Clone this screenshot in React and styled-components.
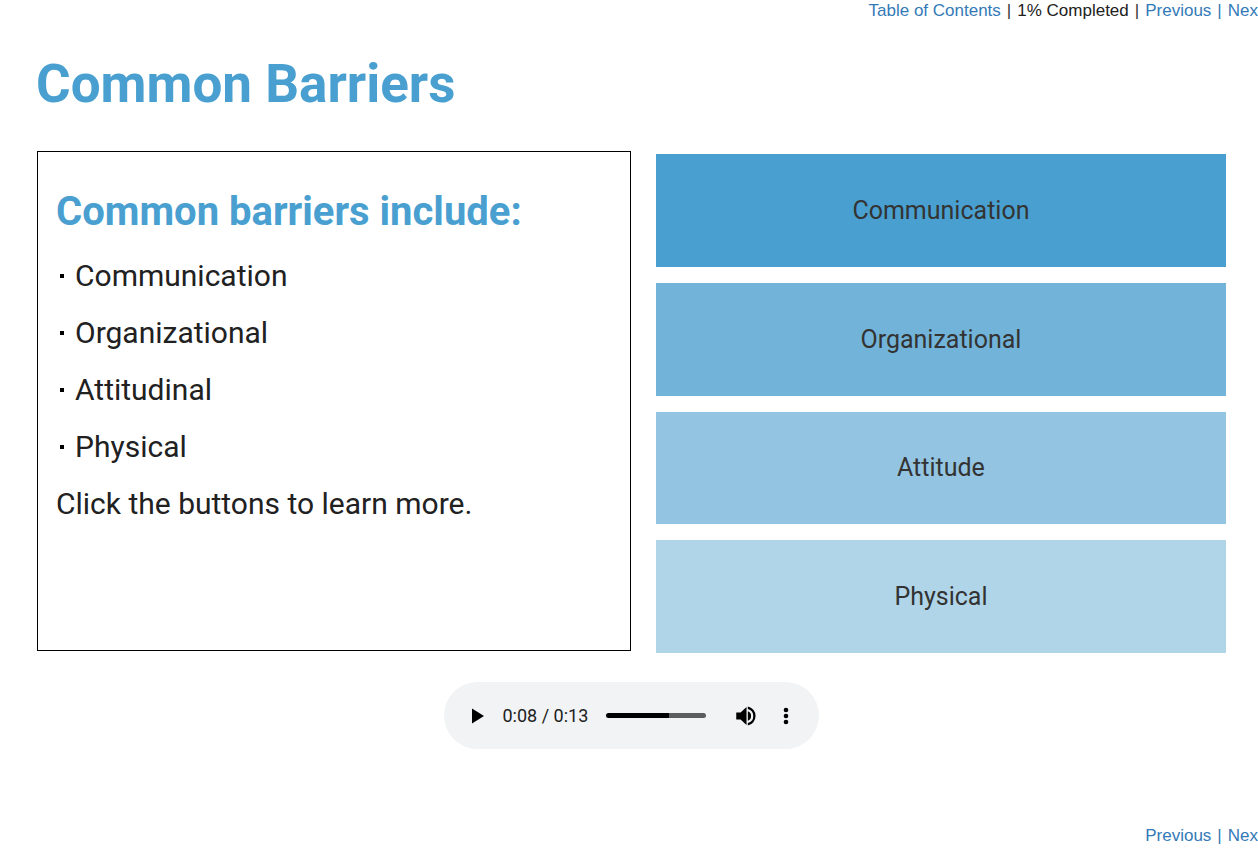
import React, { useState } from "react";
import styled, { createGlobalStyle } from "styled-components";

const GlobalStyle = createGlobalStyle`
  * {
    box-sizing: border-box;
  }

  body {
    margin: 0;
    background: #fff;
    color: #212121;
    font-family: Roboto, sans-serif;
  }
`;

const Page = styled.div`
  min-height: 100vh;
  display: flex;
  flex-direction: column;
`;

const Nav = styled.nav`
  display: flex;
  justify-content: flex-end;
  gap: 6px;
  font-family: "Liberation Sans", Arial, sans-serif;
  font-size: 17px;
  line-height: 22px;
  white-space: nowrap;
`;

const NavLink = styled.a`
  color: #337ab7;
  text-decoration: none;
`;

const Divider = styled.span`
  color: ${(props) => props.$color};
`;

const Main = styled.main`
  flex: 1;
  padding: 28px 32px 0 36px;
`;

const Title = styled.h1`
  margin: 0;
  color: #49a0d0;
  font-size: 53px;
  line-height: 68px;
  font-weight: 700;
`;

const Columns = styled.div`
  display: grid;
  grid-template-columns: 25fr 24fr;
  gap: 25px;
  margin: 33px 0 0 1px;
`;

const Panel = styled.section`
  margin-bottom: 2px;
  border: 1px solid #000;
  padding: 36px 18px;
`;

const PanelTitle = styled.h2`
  margin: 0 0 20px;
  color: #49a0d0;
  font-size: 40px;
  line-height: 48px;
  font-weight: 700;
`;

const List = styled.ul`
  margin: 0;
  padding: 0;
  list-style: none;
`;

const ListItem = styled.li`
  display: flex;
  align-items: center;
  gap: 11px;
  margin-bottom: 17px;
  font-size: 30px;
  line-height: 40px;

  &::before {
    content: "";
    width: 4px;
    height: 4px;
    margin-left: 4px;
    background: #000;
  }
`;

const Text = styled.p`
  margin: 0;
  font-size: 30px;
  line-height: 40px;
`;

const Buttons = styled.div`
  min-height: 502px;
  display: flex;
  flex-direction: column;
  gap: 16px;
  padding-top: 3px;
`;

const TopicButton = styled.button`
  flex: 1;
  border: none;
  background: ${(props) => props.$color};
  color: #333;
  font-family: inherit;
  font-size: 25px;
  cursor: pointer;
`;

const Player = styled.div`
  width: 375px;
  height: 67px;
  margin: 29px auto 0;
  padding: 0 20px 0 21px;
  display: flex;
  align-items: center;
  border-radius: 34px;
  background: #f1f3f4;
`;

const IconButton = styled.button`
  display: flex;
  padding: 0;
  border: none;
  background: none;
  color: #000;
  cursor: pointer;
`;

const Time = styled.span`
  margin-left: 14px;
  font-size: 18px;
`;

const Seek = styled.input`
  appearance: none;
  flex: 1;
  min-width: 0;
  height: 5px;
  margin: 0 27px 0 18px;
  border-radius: 3px;
  background: linear-gradient(
    to right,
    #000 ${(props) => props.$progress}%,
    #5b5c5c ${(props) => props.$progress}%
  );

  &::-webkit-slider-thumb {
    appearance: none;
    width: 0;
    height: 0;
  }
`;

const Footer = styled.footer`
  padding-bottom: 10px;
`;

const topics = [
  { name: "Communication", color: "#49a0d0" },
  { name: "Organizational", color: "#72b4d9" },
  { name: "Attitude", color: "#93c5e3" },
  { name: "Physical", color: "#b0d5e8" },
];

const barriers = ["Communication", "Organizational", "Attitudinal", "Physical"];

const PageLinks = () => (
  <>
    <NavLink href="#previous">Previous</NavLink>
    <Divider $color="#337ab7">|</Divider>
    <NavLink href="#next">Nex</NavLink>
  </>
);

const AudioPlayer = () => {
  const [time, setTime] = useState(8.2);

  return (
    <Player>
      <IconButton aria-label="Play">
        <svg width="24" height="24" viewBox="0 0 24 24" fill="currentColor">
          <path d="M7 4.5v15l12-7.5z" />
        </svg>
      </IconButton>
      <Time>0:{String(Math.floor(time)).padStart(2, "0")} / 0:13</Time>
      <Seek
        type="range"
        aria-label="Seek"
        min="0"
        max="13"
        step="0.1"
        value={time}
        onChange={(e) => setTime(Number(e.target.value))}
        $progress={(time / 13) * 100}
      />
      <IconButton aria-label="Mute">
        <svg width="26" height="26" viewBox="0 0 24 24" fill="currentColor">
          <path d="M3 8.7v6.600h4l5.500 5V3.700L7 8.700H3zm13.700 3.300A4.500 4.500 0 0 0 13.700 7.700v8.600A4.500 4.500 0 0 0 16.700 12zM13.700 3.200v2.400a6.600 6.600 0 0 1 0 12.800v2.400a9 9 0 0 0 0-17.600z" />
        </svg>
      </IconButton>
      <IconButton aria-label="More options">
        <svg width="40" height="24" viewBox="0 0 40 24" fill="currentColor">
          <circle cx="27" cy="6" r="2.3" />
          <circle cx="27" cy="12" r="2.3" />
          <circle cx="27" cy="18" r="2.3" />
        </svg>
      </IconButton>
    </Player>
  );
};

const App = () => {
  return (
    <Page>
      <GlobalStyle />
      <Nav aria-label="Course">
        <NavLink href="#contents">Table of Contents</NavLink>
        <Divider $color="#333">|</Divider>
        <span>1% Completed</span>
        <Divider $color="#333">|</Divider>
        <PageLinks />
      </Nav>
      <Main>
        <Title>Common Barriers</Title>
        <Columns>
          <Panel>
            <PanelTitle>Common barriers include:</PanelTitle>
            <List>
              {barriers.map((barrier) => (
                <ListItem key={barrier}>{barrier}</ListItem>
              ))}
            </List>
            <Text>Click the buttons to learn more.</Text>
          </Panel>
          <Buttons>
            {topics.map((topic) => (
              <TopicButton key={topic.name} $color={topic.color}>
                {topic.name}
              </TopicButton>
            ))}
          </Buttons>
        </Columns>
        <AudioPlayer />
      </Main>
      <Footer>
        <Nav aria-label="Page">
          <PageLinks />
        </Nav>
      </Footer>
    </Page>
  );
};

export default App;
